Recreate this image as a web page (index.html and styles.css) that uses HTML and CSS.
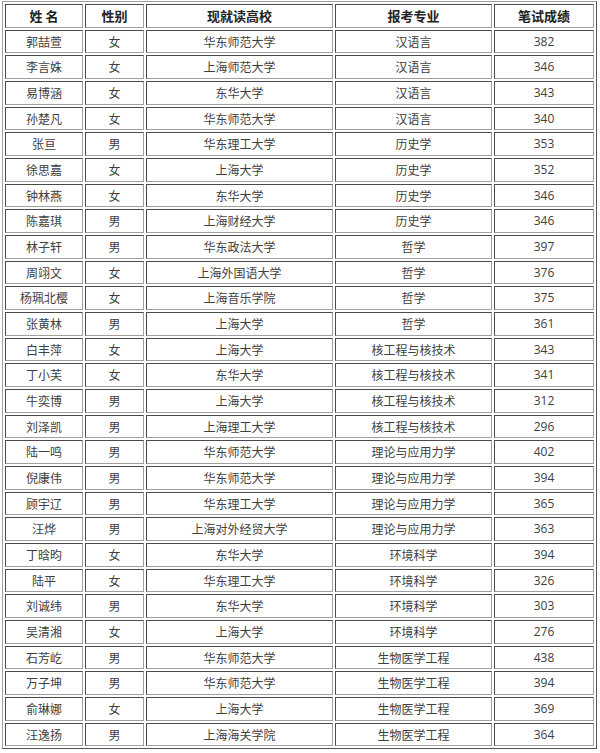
FILE: index.html
```html
<!DOCTYPE html>
<html lang="zh-CN">
<head>
<meta charset="utf-8">
<title>成绩表</title>
<link rel="stylesheet" href="styles.css">
</head>
<body>
<table class="score-table">
  <colgroup>
    <col class="c-name"><col class="c-sex"><col class="c-school"><col class="c-major"><col class="c-score">
  </colgroup>
  <thead>
    <tr><th>姓 名</th><th>性别</th><th>现就读高校</th><th>报考专业</th><th>笔试成绩</th></tr>
  </thead>
  <tbody>
    <tr><td>郭喆萱</td><td>女</td><td>华东师范大学</td><td>汉语言</td><td class="num">382</td></tr>
    <tr><td>李言姝</td><td>女</td><td>上海师范大学</td><td>汉语言</td><td class="num">346</td></tr>
    <tr><td>易博涵</td><td>女</td><td>东华大学</td><td>汉语言</td><td class="num">343</td></tr>
    <tr><td>孙楚凡</td><td>女</td><td>华东师范大学</td><td>汉语言</td><td class="num">340</td></tr>
    <tr><td>张亘</td><td>男</td><td>华东理工大学</td><td>历史学</td><td class="num">353</td></tr>
    <tr><td>徐思嘉</td><td>女</td><td>上海大学</td><td>历史学</td><td class="num">352</td></tr>
    <tr><td>钟林燕</td><td>女</td><td>东华大学</td><td>历史学</td><td class="num">346</td></tr>
    <tr><td>陈嘉琪</td><td>男</td><td>上海财经大学</td><td>历史学</td><td class="num">346</td></tr>
    <tr><td>林子轩</td><td>男</td><td>华东政法大学</td><td>哲学</td><td class="num">397</td></tr>
    <tr><td>周翊文</td><td>女</td><td>上海外国语大学</td><td>哲学</td><td class="num">376</td></tr>
    <tr><td>杨珮北樱</td><td>女</td><td>上海音乐学院</td><td>哲学</td><td class="num">375</td></tr>
    <tr><td>张黄林</td><td>男</td><td>上海大学</td><td>哲学</td><td class="num">361</td></tr>
    <tr><td>白丰萍</td><td>女</td><td>上海大学</td><td>核工程与核技术</td><td class="num">343</td></tr>
    <tr><td>丁小芙</td><td>女</td><td>东华大学</td><td>核工程与核技术</td><td class="num">341</td></tr>
    <tr><td>牛奕博</td><td>男</td><td>上海大学</td><td>核工程与核技术</td><td class="num">312</td></tr>
    <tr><td>刘泽凯</td><td>男</td><td>上海理工大学</td><td>核工程与核技术</td><td class="num">296</td></tr>
    <tr><td>陆一鸣</td><td>男</td><td>华东师范大学</td><td>理论与应用力学</td><td class="num">402</td></tr>
    <tr><td>倪康伟</td><td>男</td><td>华东师范大学</td><td>理论与应用力学</td><td class="num">394</td></tr>
    <tr><td>顾宇辽</td><td>男</td><td>华东理工大学</td><td>理论与应用力学</td><td class="num">365</td></tr>
    <tr><td>汪烨</td><td>男</td><td>上海对外经贸大学</td><td>理论与应用力学</td><td class="num">363</td></tr>
    <tr><td>丁晗昀</td><td>女</td><td>东华大学</td><td>环境科学</td><td class="num">394</td></tr>
    <tr><td>陆平</td><td>女</td><td>华东理工大学</td><td>环境科学</td><td class="num">326</td></tr>
    <tr><td>刘诚纬</td><td>男</td><td>东华大学</td><td>环境科学</td><td class="num">303</td></tr>
    <tr><td>吴清湘</td><td>女</td><td>上海大学</td><td>环境科学</td><td class="num">276</td></tr>
    <tr><td>石芳屹</td><td>男</td><td>华东师范大学</td><td>生物医学工程</td><td class="num">438</td></tr>
    <tr><td>万子坤</td><td>男</td><td>华东师范大学</td><td>生物医学工程</td><td class="num">394</td></tr>
    <tr><td>俞琳娜</td><td>女</td><td>上海大学</td><td>生物医学工程</td><td class="num">369</td></tr>
    <tr><td>汪逸扬</td><td>男</td><td>上海海关学院</td><td>生物医学工程</td><td class="num">364</td></tr>
  </tbody>
</table>
</body>
</html>
```
FILE: styles.css
```css
html, body {
  margin: 0;
  padding: 0;
  background: #ffffff;
}
body {
  padding: 1px 0 0 2px;
  font-family: "Noto Sans CJK SC", "Noto Sans", sans-serif;
  font-size: 12px;
  color: #404040;
}
.score-table {
  table-layout: fixed;
  border-collapse: separate;
  border-spacing: 2px;
  border: 1px solid;
  border-color: #a0a0a0 #555555 #555555 #a0a0a0;
  width: 595px;
}
.c-name { width: 78px; }
.c-sex { width: 59px; }
.c-school { width: 187px; }
.c-major { width: 157px; }
.c-score { width: 100px; }
.score-table th,
.score-table td {
  box-sizing: border-box;
  height: 23.68px;
  padding: 0;
  text-align: center;
  vertical-align: middle;
  border: 1px solid;
  border-color: #4a4a4a #a0a0a0 #a0a0a0 #4a4a4a;
  line-height: 20px;
  white-space: nowrap;
}
.score-table th {
  font-size: 13px;
  font-weight: bold;
  color: #222222;
}
.score-table td.num {
  font-family: "Open Sans", "Noto Sans", sans-serif;
}
```
